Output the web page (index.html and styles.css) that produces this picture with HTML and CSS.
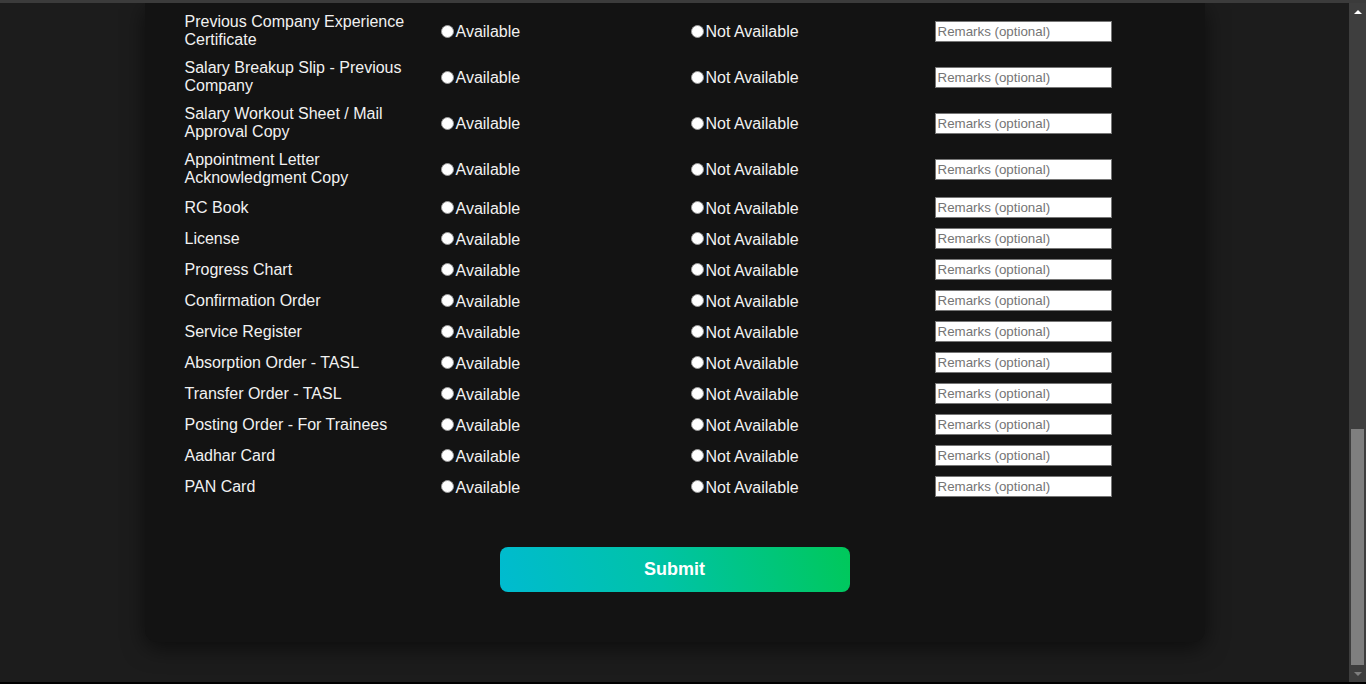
FILE: index.html
```html
<!DOCTYPE html>
<html lang="en">
<head>
<meta charset="utf-8">
<title>Document Checklist</title>
<link rel="stylesheet" href="styles.css">
</head>
<body>
<div class="top-strip"></div>
<div class="window">
  <main class="viewport">
    <form class="card">
      <div class="rows">
        <div class="row"><span class="doc">Previous Company Experience Certificate</span><label class="opt"><input type="radio" name="r1"><span class="opt-text">Available</span></label><label class="opt"><input type="radio" name="r1"><span class="opt-text">Not Available</span></label><input class="remarks" type="text" placeholder="Remarks (optional)"></div>
        <div class="row"><span class="doc">Salary Breakup Slip - Previous Company</span><label class="opt"><input type="radio" name="r2"><span class="opt-text">Available</span></label><label class="opt"><input type="radio" name="r2"><span class="opt-text">Not Available</span></label><input class="remarks" type="text" placeholder="Remarks (optional)"></div>
        <div class="row"><span class="doc">Salary Workout Sheet / Mail Approval Copy</span><label class="opt"><input type="radio" name="r3"><span class="opt-text">Available</span></label><label class="opt"><input type="radio" name="r3"><span class="opt-text">Not Available</span></label><input class="remarks" type="text" placeholder="Remarks (optional)"></div>
        <div class="row"><span class="doc">Appointment Letter Acknowledgment Copy</span><label class="opt"><input type="radio" name="r4"><span class="opt-text">Available</span></label><label class="opt"><input type="radio" name="r4"><span class="opt-text">Not Available</span></label><input class="remarks" type="text" placeholder="Remarks (optional)"></div>
        <div class="row"><span class="doc">RC Book</span><label class="opt"><input type="radio" name="r5"><span class="opt-text">Available</span></label><label class="opt"><input type="radio" name="r5"><span class="opt-text">Not Available</span></label><input class="remarks" type="text" placeholder="Remarks (optional)"></div>
        <div class="row"><span class="doc">License</span><label class="opt"><input type="radio" name="r6"><span class="opt-text">Available</span></label><label class="opt"><input type="radio" name="r6"><span class="opt-text">Not Available</span></label><input class="remarks" type="text" placeholder="Remarks (optional)"></div>
        <div class="row"><span class="doc">Progress Chart</span><label class="opt"><input type="radio" name="r7"><span class="opt-text">Available</span></label><label class="opt"><input type="radio" name="r7"><span class="opt-text">Not Available</span></label><input class="remarks" type="text" placeholder="Remarks (optional)"></div>
        <div class="row"><span class="doc">Confirmation Order</span><label class="opt"><input type="radio" name="r8"><span class="opt-text">Available</span></label><label class="opt"><input type="radio" name="r8"><span class="opt-text">Not Available</span></label><input class="remarks" type="text" placeholder="Remarks (optional)"></div>
        <div class="row"><span class="doc">Service Register</span><label class="opt"><input type="radio" name="r9"><span class="opt-text">Available</span></label><label class="opt"><input type="radio" name="r9"><span class="opt-text">Not Available</span></label><input class="remarks" type="text" placeholder="Remarks (optional)"></div>
        <div class="row"><span class="doc">Absorption Order - TASL</span><label class="opt"><input type="radio" name="r10"><span class="opt-text">Available</span></label><label class="opt"><input type="radio" name="r10"><span class="opt-text">Not Available</span></label><input class="remarks" type="text" placeholder="Remarks (optional)"></div>
        <div class="row"><span class="doc">Transfer Order - TASL</span><label class="opt"><input type="radio" name="r11"><span class="opt-text">Available</span></label><label class="opt"><input type="radio" name="r11"><span class="opt-text">Not Available</span></label><input class="remarks" type="text" placeholder="Remarks (optional)"></div>
        <div class="row"><span class="doc">Posting Order - For Trainees</span><label class="opt"><input type="radio" name="r12"><span class="opt-text">Available</span></label><label class="opt"><input type="radio" name="r12"><span class="opt-text">Not Available</span></label><input class="remarks" type="text" placeholder="Remarks (optional)"></div>
        <div class="row"><span class="doc">Aadhar Card</span><label class="opt"><input type="radio" name="r13"><span class="opt-text">Available</span></label><label class="opt"><input type="radio" name="r13"><span class="opt-text">Not Available</span></label><input class="remarks" type="text" placeholder="Remarks (optional)"></div>
        <div class="row"><span class="doc">PAN Card</span><label class="opt"><input type="radio" name="r14"><span class="opt-text">Available</span></label><label class="opt"><input type="radio" name="r14"><span class="opt-text">Not Available</span></label><input class="remarks" type="text" placeholder="Remarks (optional)"></div>
      </div>
      <button type="button" class="submit">Submit</button>
    </form>
  </main>
  <div class="scrollbar">
    <div class="sb-btn"><span class="arrow-up"></span></div>
    <div class="sb-track"></div>
    <div class="sb-thumb"></div>
    <div class="sb-btn"><span class="arrow-down"></span></div>
  </div>
</div>
<div class="bottom-strip"></div>
</body>
</html>
```

FILE: styles.css
```css
* { box-sizing: border-box; }

html, body {
  margin: 0;
  height: 684px;
  overflow: hidden;
}

body {
  display: flex;
  flex-direction: column;
  background: #1c1c1c;
  font-family: "Liberation Sans", Arial, sans-serif;
}

.top-strip {
  height: 3px;
  flex: none;
  background: #3b3b3b;
}

.bottom-strip {
  height: 2px;
  flex: none;
  background: #000;
}

.window {
  flex: 1;
  display: flex;
  min-height: 0;
}

.viewport {
  flex: 1;
  background: #1c1c1c;
  overflow: hidden;
}

.card {
  width: 1060px;
  margin: 0 auto;
  padding: 5px 40px 50px;
  background: #131313;
  border-radius: 0 0 12px 12px;
  box-shadow: 0 6px 22px rgba(0, 0, 0, 0.55);
  display: flex;
  flex-direction: column;
}

.rows {
  display: flex;
  flex-direction: column;
}

.row {
  display: grid;
  grid-template-columns: 255px 250px 245px 1fr;
  align-items: center;
  padding: 5px 0;
  color: #f1f1f1;
  font-size: 16px;
  line-height: 18px;
}

.doc {
  padding-right: 10px;
}

.opt {
  display: flex;
  align-items: center;
  gap: 2px;
}

.opt-text {
  padding-top: 2px;
}

.opt input {
  appearance: none;
  -webkit-appearance: none;
  margin: 0 0 0 1px;
  width: 13px;
  height: 13px;
  flex: none;
  border-radius: 50%;
  background: #ffffff;
  border: 1px solid #9a9a9a;
}

.remarks {
  width: 177px;
  height: 21px;
  padding: 1px 2px;
  border: 1px solid #767676;
  background: #fff;
  font-family: "Liberation Sans", Arial, sans-serif;
  font-size: 13.33px;
  color: #000;
}

.remarks::placeholder {
  color: #757575;
}

.submit {
  width: 350px;
  height: 45px;
  margin: 45px auto 0;
  border: none;
  border-radius: 8px;
  background: linear-gradient(75deg, #00bbd0 0%, #00c3a8 45%, #00c85a 100%);
  color: #fff;
  font-family: "Liberation Sans", Arial, sans-serif;
  font-size: 18px;
  font-weight: bold;
}

.scrollbar {
  width: 17px;
  flex: none;
  background: #3e3e3e;
  display: flex;
  flex-direction: column;
}

.sb-btn {
  height: 17px;
  flex: none;
  display: flex;
  align-items: center;
  justify-content: center;
}

.arrow-up {
  width: 0;
  height: 0;
  border-left: 4px solid transparent;
  border-right: 4px solid transparent;
  border-bottom: 4px solid #ffffff;
}

.arrow-down {
  width: 0;
  height: 0;
  border-left: 4px solid transparent;
  border-right: 4px solid transparent;
  border-top: 4px solid #7e7e7e;
}

.sb-track {
  flex: 1;
}

.sb-thumb {
  height: 236px;
  flex: none;
  margin: 0 2px;
  background: #7f7f7f;
}
```
